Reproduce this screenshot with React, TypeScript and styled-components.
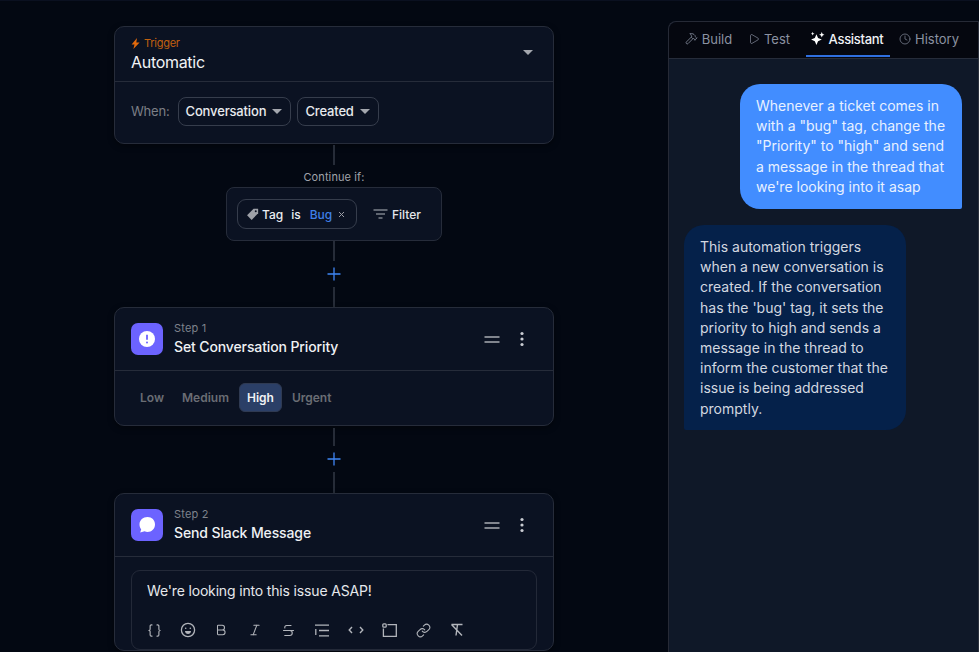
import React from "react";
import styled, { createGlobalStyle } from "styled-components";
import { Braces, Bold, Italic, Strikethrough, Link, Hammer, Play, Clock } from "lucide-react";

const Global = createGlobalStyle`
  html, body { margin: 0; padding: 0; background: #030812; }
  body { font-family: Inter, "Liberation Sans", sans-serif; -webkit-font-smoothing: antialiased; }
  #root { height: 652px; overflow: hidden; }
  * { box-sizing: border-box; }
`;

const Page = styled.div`
  display: flex;
  width: 979px;
  height: 652px;
  overflow: hidden;
  background: #030812;
  border-top: 1px solid #0a1020;
`;
const Canvas = styled.main`
  width: 668px;
  flex: none;
  padding: 25px 0 0 114px;
`;
const Flow = styled.div`
  width: 440px;
  display: flex;
  flex-direction: column;
  align-items: center;
`;
const Card = styled.section`
  width: 440px;
  flex: none;
  background: #0b1222;
  border: 1px solid #262c3a;
  border-radius: 10px;
  box-shadow: 0 2px 6px rgba(0, 0, 0, 0.4);
`;
const Line = styled.div<{ $h: number; $mt?: number }>`
  width: 2px;
  height: ${(p) => p.$h}px;
  margin-top: ${(p) => p.$mt ?? 0}px;
  background: #262c38;
  flex: none;
`;
const TriggerHead = styled.div`
  height: 55px;
  padding: 10px 16px 0 16px;
  border-bottom: 1px solid #262c3a;
  position: relative;
`;
const TriggerLabel = styled.div`
  display: flex;
  align-items: center;
  gap: 4px;
  font-size: 11px;
  line-height: 13px;
  color: #c2600f;
  letter-spacing: -0.25px;
`;
const TriggerTitle = styled.div`
  font-size: 16px;
  line-height: 20px;
  margin-top: 2px;
  color: #f1f3f6;
  letter-spacing: -0.3px;
`;
const Caret = styled.span<{ $size?: number }>`
  display: inline-block;
  width: 0;
  height: 0;
  border-left: ${(p) => p.$size ?? 5}px solid transparent;
  border-right: ${(p) => p.$size ?? 5}px solid transparent;
  border-top: ${(p) => p.$size ?? 5}px solid #a4a7ae;
`;
const HeadCaret = styled.div`
  position: absolute;
  right: 20px;
  top: 23px;
  display: flex;
`;
const WhenRow = styled.div`
  height: 61px;
  display: flex;
  align-items: center;
  padding: 0 0 3px 16px;
  gap: 6px;
`;
const WhenLabel = styled.span`
  font-size: 13px;
  color: #7c7f86;
  margin-right: 2px;
  letter-spacing: -0.2px;
`;
const Select = styled.div`
  height: 29px;
  display: flex;
  align-items: center;
  gap: 6px;
  padding: 0 8px 0 7px;
  border: 1px solid #363d4c;
  border-radius: 8px;
  font-size: 13px;
  font-weight: 500;
  color: #e8eaee;
  letter-spacing: -0.15px;
`;
const ContinueLabel = styled.div`
  font-size: 11px;
  line-height: 14px;
  margin-top: 5px;
  color: #a0a3aa;
  letter-spacing: 0.1px;
`;
const FilterCard = styled.div`
  width: 216px;
  height: 54px;
  margin-top: 3px;
  flex: none;
  display: flex;
  align-items: center;
  padding-left: 10px;
  background: #0b1222;
  border: 1px solid #262c3a;
  border-radius: 8px;
`;
const TagChip = styled.div`
  width: 120px;
  height: 30px;
  display: flex;
  align-items: center;
  padding-left: 8px;
  border: 1px solid #363d4c;
  border-radius: 9px;
  font-size: 12px;
  font-weight: 500;
  color: #eceef1;
`;
const ChipWord = styled.span<{ $blue?: boolean; $ml: number }>`
  display: inline-flex;
  margin-left: ${(p) => p.$ml}px;
  color: ${(p) => (p.$blue ? "#3f80e8" : "#eceef1")};
`;
const FilterBtn = styled.div`
  display: flex;
  align-items: center;
  gap: 4px;
  margin-left: 16px;
  font-size: 12px;
  font-weight: 500;
  color: #e4e6ea;
`;
const PlusWrap = styled.div`
  width: 16px;
  height: 16px;
  margin: 5px 0 5px;
  display: flex;
  flex: none;
`;
const StepHead = styled.div`
  height: 63px;
  display: flex;
  align-items: center;
  padding: 0 24px 0 16px;
  border-bottom: 1px solid #262c3a;
`;
const StepIcon = styled.div`
  width: 32px;
  height: 32px;
  flex: none;
  display: flex;
  align-items: center;
  justify-content: center;
  background: #6c63ff;
  border-radius: 7px;
  margin-right: 11px;
`;
const StepText = styled.div`
  flex: 1;
  padding-bottom: 1px;
`;
const StepNo = styled.div`
  font-size: 11px;
  line-height: 14px;
  color: #7e828c;
  letter-spacing: 0.2px;
`;
const StepTitle = styled.div`
  font-size: 14px;
  line-height: 18px;
  margin-top: 3px;
  font-weight: 500;
  color: #eff1f4;
  letter-spacing: -0.12px;
`;
const StepActions = styled.div`
  display: flex;
  align-items: center;
  gap: 15px;
`;
const PriorityRow = styled.div`
  height: 54px;
  display: flex;
  align-items: center;
  padding: 0 0 1px 16px;
`;
const Priority = styled.div<{ $active?: boolean }>`
  height: 29px;
  padding: 0 ${(p) => (p.$active ? 7 : 8)}px;
  margin: 0 ${(p) => (p.$active ? 1 : 0)}px;
  display: flex;
  align-items: center;
  border-radius: 6px;
  font-size: 12px;
  font-weight: 600;
  color: ${(p) => (p.$active ? "#f0f2f5" : "#6a6d74")};
  background: ${(p) => (p.$active ? "#2b3f67" : "transparent")};
  border: 1px solid ${(p) => (p.$active ? "#2f3a52" : "transparent")};
`;
const EditorWrap = styled.div`
  padding: 13px 16px 0;
`;
const Editor = styled.div`
  height: 80px;
  border: 1px solid #232938;
  border-radius: 9px;
  padding: 11px 15px;
`;
const EditorText = styled.div`
  font-size: 14px;
  line-height: 18px;
  color: #e6e8ec;
  letter-spacing: -0.16px;
`;
const Toolbar = styled.div`
  display: flex;
  align-items: center;
  margin: 22px 0 0 -1px;
  gap: 17.7px;
  color: #b2b5bb;
`;
const ToolSlot = styled.span`
  width: 16px;
  height: 16px;
  display: flex;
  align-items: center;
  justify-content: center;
`;
const Panel = styled.aside`
  width: 311px;
  height: 640px;
  margin-top: 20px;
  flex: none;
  display: flex;
  flex-direction: column;
  background: #0f1828;
  border-left: 1px solid #262a36;
  border-right: 1px solid #2b303c;
  border-top: 1px solid #262a36;
  border-top-left-radius: 8px;
`;
const Tabs = styled.nav`
  height: 37px;
  flex: none;
  display: flex;
  background: #05070f;
  border-bottom: 1px solid #262c3a;
  padding-left: 8px;
  border-top-left-radius: 8px;
`;
const Tab = styled.div<{ $active?: boolean; $w: number; $mr?: number }>`
  width: ${(p) => p.$w}px;
  height: 35px;
  margin-right: ${(p) => p.$mr ?? 0}px;
  padding-right: ${(p) => (p.$active ? 3 : 0)}px;
  flex: none;
  display: flex;
  align-items: center;
  justify-content: center;
  gap: 4px;
  font-size: 13px;
  font-weight: ${(p) => (p.$active ? 500 : 400)};
  letter-spacing: ${(p) => (p.$active ? "-0.3px" : "0")};
  color: ${(p) => (p.$active ? "#f0f2f6" : "#8b92a1")};
  border-bottom: 2px solid ${(p) => (p.$active ? "#2f6fe0" : "transparent")};
  svg { color: ${(p) => (p.$active ? "#fff" : "#7d8494")}; }
`;
const Messages = styled.div`
  flex: 1;
  display: flex;
  flex-direction: column;
  padding: 25px 16px 0 15px;
  gap: 16px;
`;
const Bubble = styled.div<{ $user?: boolean }>`
  width: 222px;
  padding: 12px 16px ${(p) => (p.$user ? 12 : 11)}px;
  font-size: 14px;
  line-height: 20.2px;
  align-self: ${(p) => (p.$user ? "flex-end" : "flex-start")};
  background: ${(p) => (p.$user ? "#428dff" : "#05214a")};
  color: ${(p) => (p.$user ? "#e8f1ff" : "#d3d8e0")};
  border-radius: ${(p) => (p.$user ? "20px 20px 2px 20px" : "20px 20px 20px 2px")};
`;
const Composer = styled.div`
  height: 4px;
  margin: 0 30px 0 30px;
  border-top: 1px solid #1a1722;
`;

const StepGlyphs = () => (
  <StepActions>
    <svg width="16" height="7" viewBox="0 0 16 7"><path d="M.5 1h15M.5 6h15" stroke="#a9acb3" strokeWidth="1.4" /></svg>
    <svg width="14" height="16" viewBox="0 0 14 16"><g fill="#c9ccd2"><circle cx="7" cy="2.5" r="1.6" /><circle cx="7" cy="8" r="1.6" /><circle cx="7" cy="13.5" r="1.6" /></g></svg>
  </StepActions>
);

const Plus = () => (
  <PlusWrap>
    <svg width="16" height="16" viewBox="0 0 16 16"><path d="M8 1.5v13M1.500 8h13" stroke="#3f86f5" strokeWidth="1.3" /></svg>
  </PlusWrap>
);

const tools = [
  <Braces size={15} strokeWidth={1.8} />,
  <svg width="16" height="16" viewBox="0 0 16 16" fill="none" stroke="currentColor" strokeWidth="1.3"><circle cx="8" cy="8" r="6.6" /><circle cx="5.7" cy="6.2" r=".8" fill="currentColor" stroke="none" /><circle cx="10.3" cy="6.2" r=".8" fill="currentColor" stroke="none" /><path d="M5 9h6c0 2-1.400 3-3 3S5 11 5 9z" fill="currentColor" stroke="none" /></svg>,
  <Bold size={14} strokeWidth={1.8} />,
  <Italic size={14} strokeWidth={1.8} />,
  <Strikethrough size={15} strokeWidth={1.8} />,
  <svg width="14" height="13" viewBox="0 0 14 13" fill="none" stroke="currentColor" strokeWidth="1.3"><path d="M0 1.200h14M4 6.500h10M4 11.800h10M.8 5v6" /></svg>,
  <svg width="16" height="10" viewBox="0 0 16 10" fill="none" stroke="currentColor" strokeWidth="1.4"><path d="M4 2L1.200 5 4 8M12 2l2.800 3L12 8" /></svg>,
  <svg width="15" height="14" viewBox="0 0 15 14" fill="none" stroke="currentColor" strokeWidth="1.3"><path d="M5.500 1.600h8.800v11.700H1.400V5.500" /><rect x=".8" y=".8" width="3.400" height="3.400" rx="1" /></svg>,
  <Link size={15} strokeWidth={1.7} />,
  <svg width="14" height="14" viewBox="0 0 14 14" fill="none" stroke="currentColor" strokeWidth="1.4"><path d="M1.500 1.500h11M7.500 1.500L6 12.500M1.500 1.500l10.500 11" /></svg>,
];

export default function App() {
  return (
    <Page>
      <Global />
      <Canvas>
        <Flow>
          <Card>
            <TriggerHead>
              <TriggerLabel>
                <svg width="9" height="11" viewBox="0 0 9 11"><path d="M6 0L.6 6.400h2.900L2.400 11 8.600 4.400H5.300L6 0z" fill="#e36a0c" /></svg>
                Trigger
              </TriggerLabel>
              <TriggerTitle>Automatic</TriggerTitle>
              <HeadCaret><Caret /></HeadCaret>
            </TriggerHead>
            <WhenRow>
              <WhenLabel>When:</WhenLabel>
              <Select>Conversation <Caret /></Select>
              <Select>Created <Caret /></Select>
            </WhenRow>
          </Card>
          <Line $h={20} $mt={1} />
          <ContinueLabel>Continue if:</ContinueLabel>
          <FilterCard>
            <TagChip>
              <svg width="13" height="13" viewBox="0 0 12 12"><path d="M7 .7h4.200v4.200L5.200 11 1 6.800 7 .7z" fill="#9ea1a8" /><circle cx="9" cy="3" r=".9" fill="#0b1222" /></svg>
              <ChipWord $ml={3}>Tag</ChipWord>
              <ChipWord $ml={8}>is</ChipWord>
              <ChipWord $ml={9} $blue>Bug</ChipWord>
              <ChipWord $ml={6}>
                <svg width="7" height="7" viewBox="0 0 7 7"><path d="M1 1l5 5M6 1L1 6" stroke="#9a9da5" strokeWidth="1" /></svg>
              </ChipWord>
            </TagChip>
            <FilterBtn>
              <svg width="15" height="10" viewBox="0 0 15 10"><path d="M.5 1h14M3 5h9M5.500 9h4" stroke="#b4b7bd" strokeWidth="1.2" /></svg>
              Filter
            </FilterBtn>
          </FilterCard>
          <Line $h={20} />
          <Plus />
          <Line $h={20} />
          <Card>
            <StepHead>
              <StepIcon>
                <svg width="16" height="16" viewBox="0 0 16 16"><circle cx="8" cy="8" r="8" fill="#fff" /><path d="M8 3.800v5" stroke="#6c63ff" strokeWidth="1.8" /><circle cx="8" cy="11.400" r="1" fill="#6c63ff" /></svg>
              </StepIcon>
              <StepText>
                <StepNo>Step 1</StepNo>
                <StepTitle>Set Conversation Priority</StepTitle>
              </StepText>
              <StepGlyphs />
            </StepHead>
            <PriorityRow>
              <Priority>Low</Priority>
              <Priority>Medium</Priority>
              <Priority $active>High</Priority>
              <Priority>Urgent</Priority>
            </PriorityRow>
          </Card>
          <Line $h={18} $mt={2} />
          <Plus />
          <Line $h={21} />
          <Card>
            <StepHead>
              <StepIcon>
                <svg width="18" height="18" viewBox="0 0 18 18"><path d="M9.500 1C13.900 1 17 4.200 17 8.400s-3.300 7.500-7.500 7.500c-1 0-2-.2-2.900-.6L2.200 16.600l1-3.400C2 11.900 1.500 10.200 1.500 8.400 1.500 4.200 5 1 9.500 1z" fill="#fff" /></svg>
              </StepIcon>
              <StepText>
                <StepNo>Step 2</StepNo>
                <StepTitle>Send Slack Message</StepTitle>
              </StepText>
              <StepGlyphs />
            </StepHead>
            <EditorWrap>
              <Editor>
                <EditorText>We're looking into this issue ASAP!</EditorText>
                <Toolbar>
                  {tools.map((t, i) => (
                    <ToolSlot key={i}>{t}</ToolSlot>
                  ))}
                </Toolbar>
              </Editor>
            </EditorWrap>
          </Card>
        </Flow>
      </Canvas>
      <Panel>
        <Tabs>
          <Tab $w={63}><Hammer size={13} strokeWidth={1.6} /> Build</Tab>
          <Tab $w={58} $mr={8}><Play size={12} strokeWidth={1.5} /> Test</Tab>
          <Tab $w={84} $active>
            <svg width="15" height="15" viewBox="0 0 14 14" fill="#fff"><path d="M6 3l1.500 3.500L11 8 7.500 9.500 6 13 4.500 9.500 1 8l3.500-1.500zM11 1l.8 1.800 1.700.7-1.700.8L11 6l-.8-1.700-1.700-.8 1.700-.7zM2.500.8l.5 1.200 1.200.5-1.200.5-.5 1.200L2 3 .8 2.500 2 2z" /></svg>
            Assistant
          </Tab>
          <Tab $w={78}><Clock size={12} strokeWidth={1.5} /> History</Tab>
        </Tabs>
        <Messages>
          <Bubble $user>Whenever a ticket comes in with a "bug" tag, change the "Priority" to "high" and send a message in the thread that we're looking into it asap</Bubble>
          <Bubble>This automation triggers when a new conversation is created. If the conversation has the 'bug' tag, it sets the priority to high and sends a message in the thread to inform the customer that the issue is being addressed promptly.</Bubble>
        </Messages>
        <Composer />
      </Panel>
    </Page>
  );
}
